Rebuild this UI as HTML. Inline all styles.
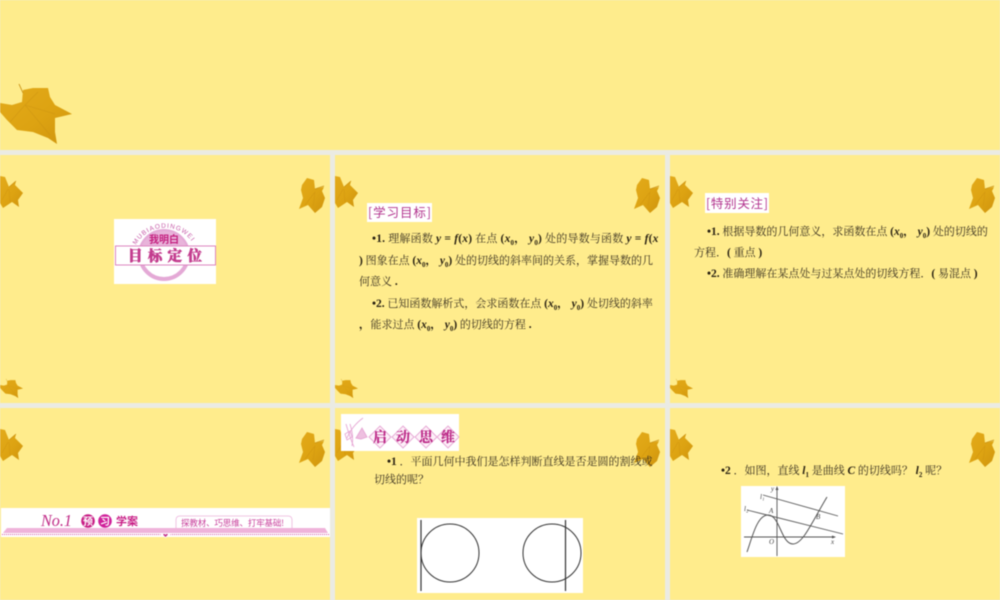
<!DOCTYPE html>
<html><head><meta charset="utf-8"><style>
html,body{margin:0;padding:0;background:#ebebe3}
#p{position:relative;width:1000px;height:600px;overflow:hidden;background:#ebebe3;filter:blur(.45px)}
svg{position:absolute;left:0;top:0}
.t{position:absolute;white-space:nowrap;font:11px/14px "Liberation Serif","Noto Serif CJK SC",serif;color:#3a3120}
.t b{font-size:11.5px;color:#2a2212}
.t b i{font-size:11.5px}
.t sub{font-size:7px;line-height:0;vertical-align:-3px;font-weight:bold}
</style></head><body><div id="p">
<svg width="1000" height="600" viewBox="0 0 1000 600">
<defs>
<linearGradient id="lg" x1="0" y1="0" x2="1" y2="1"><stop offset="0" stop-color="#e3aa1a"/><stop offset=".55" stop-color="#dda312"/><stop offset="1" stop-color="#cf940e"/></linearGradient>
<symbol id="R" overflow="visible"><path d="M3 7L8 0 15 2 16 11 25 9 23 13 26 20 23 29 16 35 9 27 0 31 4 20 2 12Z" fill="url(#lg)"/><path d="M16 11L25 8" stroke="#c98f10" stroke-width=".7" fill="none"/><path d="M16 14L14 28M16 14L6 27" stroke="#c98f10" stroke-opacity=".45" stroke-width=".7" fill="none"/></symbol>
<symbol id="L" overflow="visible"><path d="M0 0L5 1 9 11 16 5 15 9 23 17 18 24 19 31 12 26 3 32 0 27Z" fill="url(#lg)"/><path d="M9 11L16 5" stroke="#c98f10" stroke-width=".7" fill="none"/><path d="M9 13L10 26M8 13L2 24" stroke="#c98f10" stroke-opacity=".45" stroke-width=".7" fill="none"/></symbol>
<symbol id="B" overflow="visible"><path d="M0 103L12 105 22 102 23 90 33 88 48 88 50 97 55 105 72 114 55 118 55 132 57 144 48 138 33 132 17 130 7 120 0 112Z" fill="url(#lg)"/><path d="M19 84L23 93" stroke="#c98f10" stroke-width=".9" fill="none"/><path d="M25 105L55 114M25 105L50 135M25 105L10 122M25 105L38 92" stroke="#c08a10" stroke-opacity=".35" stroke-width=".9" fill="none"/></symbol>
<path id="arc" d="M136 245A33 33 0 0 1 194 245"/>
<clipPath id="tp"><rect x="130" y="220" width="70" height="26"/></clipPath>
</defs>
<rect x="0" y="0" width="1000" height="150" fill="#feec8c"/>
<rect x="0" y="155" width="330" height="248" fill="#ffec8c"/>
<rect x="335" y="155" width="330" height="248" fill="#ffec8c"/>
<rect x="670" y="155" width="330" height="248" fill="#ffec8c"/>
<rect x="0" y="408" width="330" height="192" fill="#ffec8c"/>
<rect x="335" y="408" width="330" height="192" fill="#ffec8c"/>
<rect x="670" y="408" width="330" height="192" fill="#ffec8c"/>

<use href="#B" x="0" y="0"/>
<g id="leaves">
<use href="#L" x="0" y="176"/><use href="#R" x="299" y="178"/>
<use href="#L" x="335" y="176"/><use href="#R" x="634" y="178"/>
<use href="#L" x="670" y="176"/><use href="#R" x="969" y="178"/>
<use href="#L" x="0" y="429"/><use href="#R" x="299" y="432"/>
<use href="#L" x="335" y="429"/><use href="#R" x="634" y="432"/>
<use href="#L" x="670" y="429"/><use href="#R" x="969" y="432"/>
<g transform="translate(0 352) scale(.32)"><use href="#B"/></g>
<g transform="translate(335 352) scale(.32)"><use href="#B"/></g>
<g transform="translate(670 352) scale(.32)"><use href="#B"/></g>
</g>

<!-- badge -->
<rect x="114" y="219" width="102" height="65" fill="#fff"/>
<circle cx="164" cy="255" r="24" fill="none" stroke="#e4a9d6" stroke-width="4"/>
<circle cx="164" cy="255" r="24" fill="#e8b4da" clip-path="url(#tp)"/>
<text font-family="Liberation Sans,sans-serif" font-size="6.500" fill="#c65aa8"><textPath href="#arc" textLength="66">MUBIAODINGWEI</textPath></text>
<text x="164" y="243" text-anchor="middle" font-family="Noto Sans CJK SC,sans-serif" font-weight="700" font-size="10" fill="#c4207f">我明白</text>
<rect x="115.500" y="246" width="100" height="19" fill="#fff" stroke="#dc85c0" stroke-width="1"/>
<text x="128" y="261" font-family="Noto Serif CJK SC,serif" font-weight="900" font-size="14.500" fill="#c33c8e" stroke="#c33c8e" stroke-width=".5" textLength="74">目标定位</text>

<!-- banner -->
<rect x="1" y="508" width="329" height="29" fill="#fff"/>
<path d="M3 533L7 528H325L328 533Z" fill="#efb3da"/>
<line x1="2" y1="534.500" x2="330" y2="534.500" stroke="#d556a8" stroke-width="1" stroke-dasharray="1 1"/>
<path d="M160 534H171L165.500 538Z" fill="#fff"/>
<path d="M163 534.500Q164.500 533 165.500 535Q166.500 533 168 534.500L165.500 537Z" fill="#c22a86"/>
<path d="M297 527h18" stroke="#fff" stroke-width="1" stroke-dasharray="1.500 1"/>
<text x="41" y="526" font-family="Liberation Serif,serif" font-style="italic" font-size="17" fill="#c02a87" textLength="31" lengthAdjust="spacingAndGlyphs">No.1</text>
<circle cx="88" cy="521" r="6.800" fill="#c81e86"/><circle cx="105" cy="521" r="6.800" fill="#d0209a"/>
<text x="83" y="525" font-family="Noto Sans CJK SC,sans-serif" font-weight="700" font-size="10" fill="#fff">预</text>
<text x="100" y="525" font-family="Noto Sans CJK SC,sans-serif" font-weight="700" font-size="10" fill="#fff">习</text>
<text x="116" y="525" font-family="Noto Sans CJK SC,sans-serif" font-weight="700" font-size="11" fill="#c81e86">学案</text>
<path d="M176 528V520Q176 516 180 516H288Q292 516 292 520V528" fill="#fff" stroke="#edb4dc" stroke-width=".8"/>
<text x="181" y="526" font-family="Noto Sans CJK SC,sans-serif" font-size="8.500" fill="#c8409c" textLength="103">探教材、巧思维、打牢基础!</text>

<!-- labels -->
<rect x="367" y="203" width="65" height="19" fill="#fff"/>
<text x="368" y="217" font-family="Noto Sans CJK SC,sans-serif" font-size="12.500" fill="#b2348e" textLength="63">[学习目标]</text>
<rect x="705" y="193" width="64" height="20" fill="#fff"/>
<text x="706" y="208" font-family="Noto Sans CJK SC,sans-serif" font-size="12.500" fill="#b2348e" textLength="62">[特别关注]</text>

<!-- qidong -->
<rect x="341" y="414" width="118" height="37" fill="#fff"/>
<g fill="none" stroke="#e6a6d4" stroke-width=".9">
<path d="M380 426L391 437 380 448 369 437ZM403 426L414 437 403 448 392 437ZM426 426L437 437 426 448 415 437ZM448 426L459 437 448 448 437 437Z" fill="#fdf0f8"/>
<path d="M346 424Q350 438 354 447M350 424Q354 436 352 446M363 418Q352 426 347 438M345 434L350 431 352 437 347 440Z"/>
<path d="M356 438L362 428 367 437 361 439Z" fill="#eec0e0"/>
</g>
<g font-family="Noto Serif CJK SC,serif" font-weight="700" font-size="14" fill="#bc2a88" stroke="#bc2a88" stroke-width=".25" text-anchor="middle">
<text x="380" y="442">启</text><text x="403" y="442">动</text><text x="426" y="442">思</text><text x="448" y="442">维</text>
</g>

<!-- circles -->
<rect x="417" y="518" width="166" height="75" fill="#fff"/>
<g fill="none" stroke="#333" stroke-width="1">
<circle cx="450" cy="553" r="29"/><circle cx="552" cy="553" r="29"/>
</g>
<path d="M421 520V591M565.500 520V591" stroke="#333" stroke-width="1.200"/>

<!-- graph -->
<rect x="741" y="486" width="104" height="71" fill="#fff"/>
<g fill="none" stroke="#555" stroke-width=".9">
<path d="M744 537H835M777 488V556M763 495L838 516M747 510L843 534"/>
<path d="M747 552C752 538 757 515 768 515C780 515 781 544 793 544C803 544 812 522 827 497" stroke-width="1"/>
</g>
<path d="M775.500 490L777 486 778.500 490ZM832 535.500L836 537 832 538.500Z" fill="#555"/>
<g font-family="Liberation Serif,serif" font-style="italic" font-size="7" fill="#444">
<text x="760" y="499">l₁</text><text x="744" y="511">l₂</text><text x="769" y="513">A</text><text x="816" y="519">B</text><text x="769" y="544">O</text><text x="831" y="544">x</text><text x="771" y="491">y</text>
</g>
</svg>

<div class="t" style="left:372px;top:232px;letter-spacing:.2px"><b>•1.</b> 理解函数 <b><i>y</i> = <i>f</i>(<i>x</i>)</b> 在点 <b>(<i>x</i><sub>0</sub>，&nbsp;<i>y</i><sub>0</sub>)</b> 处的导数与函数 <b><i>y</i> = <i>f</i>(<i>x</i></b></div>
<div class="t" style="left:359px;top:254px"><b>)</b> 图象在点 <b>(<i>x</i><sub>0</sub>，&nbsp;<i>y</i><sub>0</sub>)</b> 处的切线的斜率间的关系，掌握导数的几</div>
<div class="t" style="left:359px;top:275px">何意义<b> .</b></div>
<div class="t" style="left:372px;top:297px"><b>•2.</b> 已知函数解析式，会求函数在点 <b>(<i>x</i><sub>0</sub>，&nbsp;<i>y</i><sub>0</sub>)</b> 处切线的斜率</div>
<div class="t" style="left:359px;top:318px"><b>，</b>能求过点 <b>(<i>x</i><sub>0</sub>，&nbsp;<i>y</i><sub>0</sub>)</b> 的切线的方程<b> .</b></div>

<div class="t" style="left:707px;top:225px"><b>•1.</b> 根据导数的几何意义，求函数在点 <b>(<i>x</i><sub>0</sub>，&nbsp;<i>y</i><sub>0</sub>)</b> 处的切线的</div>
<div class="t" style="left:694px;top:246px">方程．<b>(</b> 重点 <b>)</b></div>
<div class="t" style="left:707px;top:267px"><b>•2.</b> 准确理解在某点处与过某点处的切线方程．<b>(</b> 易混点 <b>)</b></div>

<div class="t" style="left:387px;top:455px"><b>•1</b> ．平面几何中我们是怎样判断直线是否是圆的割线或</div>
<div class="t" style="left:374px;top:473px">切线的呢？</div>

<div class="t" style="left:721px;top:464px"><b>•2</b> ．如图，直线 <b><i>l</i><sub>1</sub></b> 是曲线 <b><i>C</i></b> 的切线吗？ <b><i>l</i><sub>2</sub></b> 呢？</div>
</div></body></html>
